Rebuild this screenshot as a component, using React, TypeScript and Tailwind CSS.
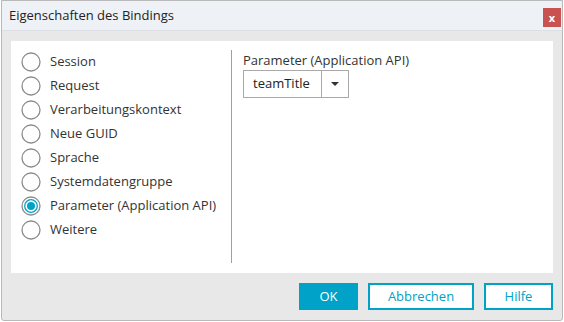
import { useState } from 'react';

const options = [
  'Session',
  'Request',
  'Verarbeitungskontext',
  'Neue GUID',
  'Sprache',
  'Systemdatengruppe',
  'Parameter (Application API)',
  'Weitere',
];

function Radio({ checked }: { checked: boolean }) {
  return (
    <svg width="20" height="20" viewBox="0 0 20 20" className="shrink-0">
      <circle cx="10" cy="10" r="9" fill="#fff" stroke="#8c8c8c" strokeWidth="1.3" />
      {checked && (
        <>
          <circle cx="10" cy="10" r="6.3" fill="#fff" stroke="#00a2c7" strokeWidth="1.3" />
          <circle cx="10" cy="10" r="4" fill="#00a2c7" />
        </>
      )}
    </svg>
  );
}

export default function App() {
  const [selected, setSelected] = useState(6);

  return (
    <div
      className="w-[564px] h-[322px] bg-white pl-[1px]"
      style={{ fontFamily: '"Open Sans", "Noto Sans", sans-serif' }}
    >
      <div className="w-[562px] h-[321px] border border-[#b9b9b9] rounded-b-[3px] bg-[#e8e8e8] flex flex-col">
        {/* Title bar */}
        <div className="h-[30px] bg-[#eef2f7] flex items-center justify-between pl-[7px] pr-[1px] border-b border-[#dcdfe3]">
          <span className="text-[13px] text-[#222]">Eigenschaften des Bindings</span>
          <button className="w-[18px] h-[19px] bg-[#c9514f] text-white text-[11px] font-bold leading-none flex items-center justify-center mt-[4px]">
            x
          </button>
        </div>

        {/* Content */}
        <div className="px-[9px] pt-[10px]">
          <div className="h-[232px] bg-white flex pt-[9px]">
            <div className="w-[220px] flex flex-col">
              {options.map((o, i) => (
                <label
                  key={o}
                  onClick={() => setSelected(i)}
                  className="h-[24px] flex items-center gap-[9px] pl-[10px] text-[13px] text-[#333] cursor-pointer"
                >
                  <Radio checked={selected === i} />
                  <span>{o}</span>
                </label>
              ))}
            </div>
            <div className="w-px bg-[#a0a0a0] mb-[10px]" />
            <div className="pl-[11px] flex flex-col">
              <span className="text-[13px] text-[#333] leading-[18px] mt-[1px]">Parameter (Application API)</span>
              <div className="mt-[1px] w-[106px] h-[28px] border border-[#a9a9a9] flex">
                <div className="flex-1 flex items-center pl-[9px] text-[13px] text-[#222]">teamTitle</div>
                <div className="w-[27px] border-l border-[#a9a9a9] flex items-center justify-center">
                  <svg width="8" height="4" viewBox="0 0 8 4">
                    <path d="M0 0h8L4 4z" fill="#333" />
                  </svg>
                </div>
              </div>
            </div>
          </div>
        </div>

        {/* Footer */}
        <div className="flex justify-end gap-[10px] pr-[9px] pt-[10px]">
          <button className="w-[59px] h-[27px] bg-[#00a2c7] text-white text-[13px]">OK</button>
          <button className="w-[106px] h-[27px] border-2 border-[#00a2c7] bg-white text-[#00a2c7] text-[13px]">
            Abbrechen
          </button>
          <button className="w-[69px] h-[27px] border-2 border-[#00a2c7] bg-white text-[#00a2c7] text-[13px]">
            Hilfe
          </button>
        </div>
      </div>
    </div>
  );
}
